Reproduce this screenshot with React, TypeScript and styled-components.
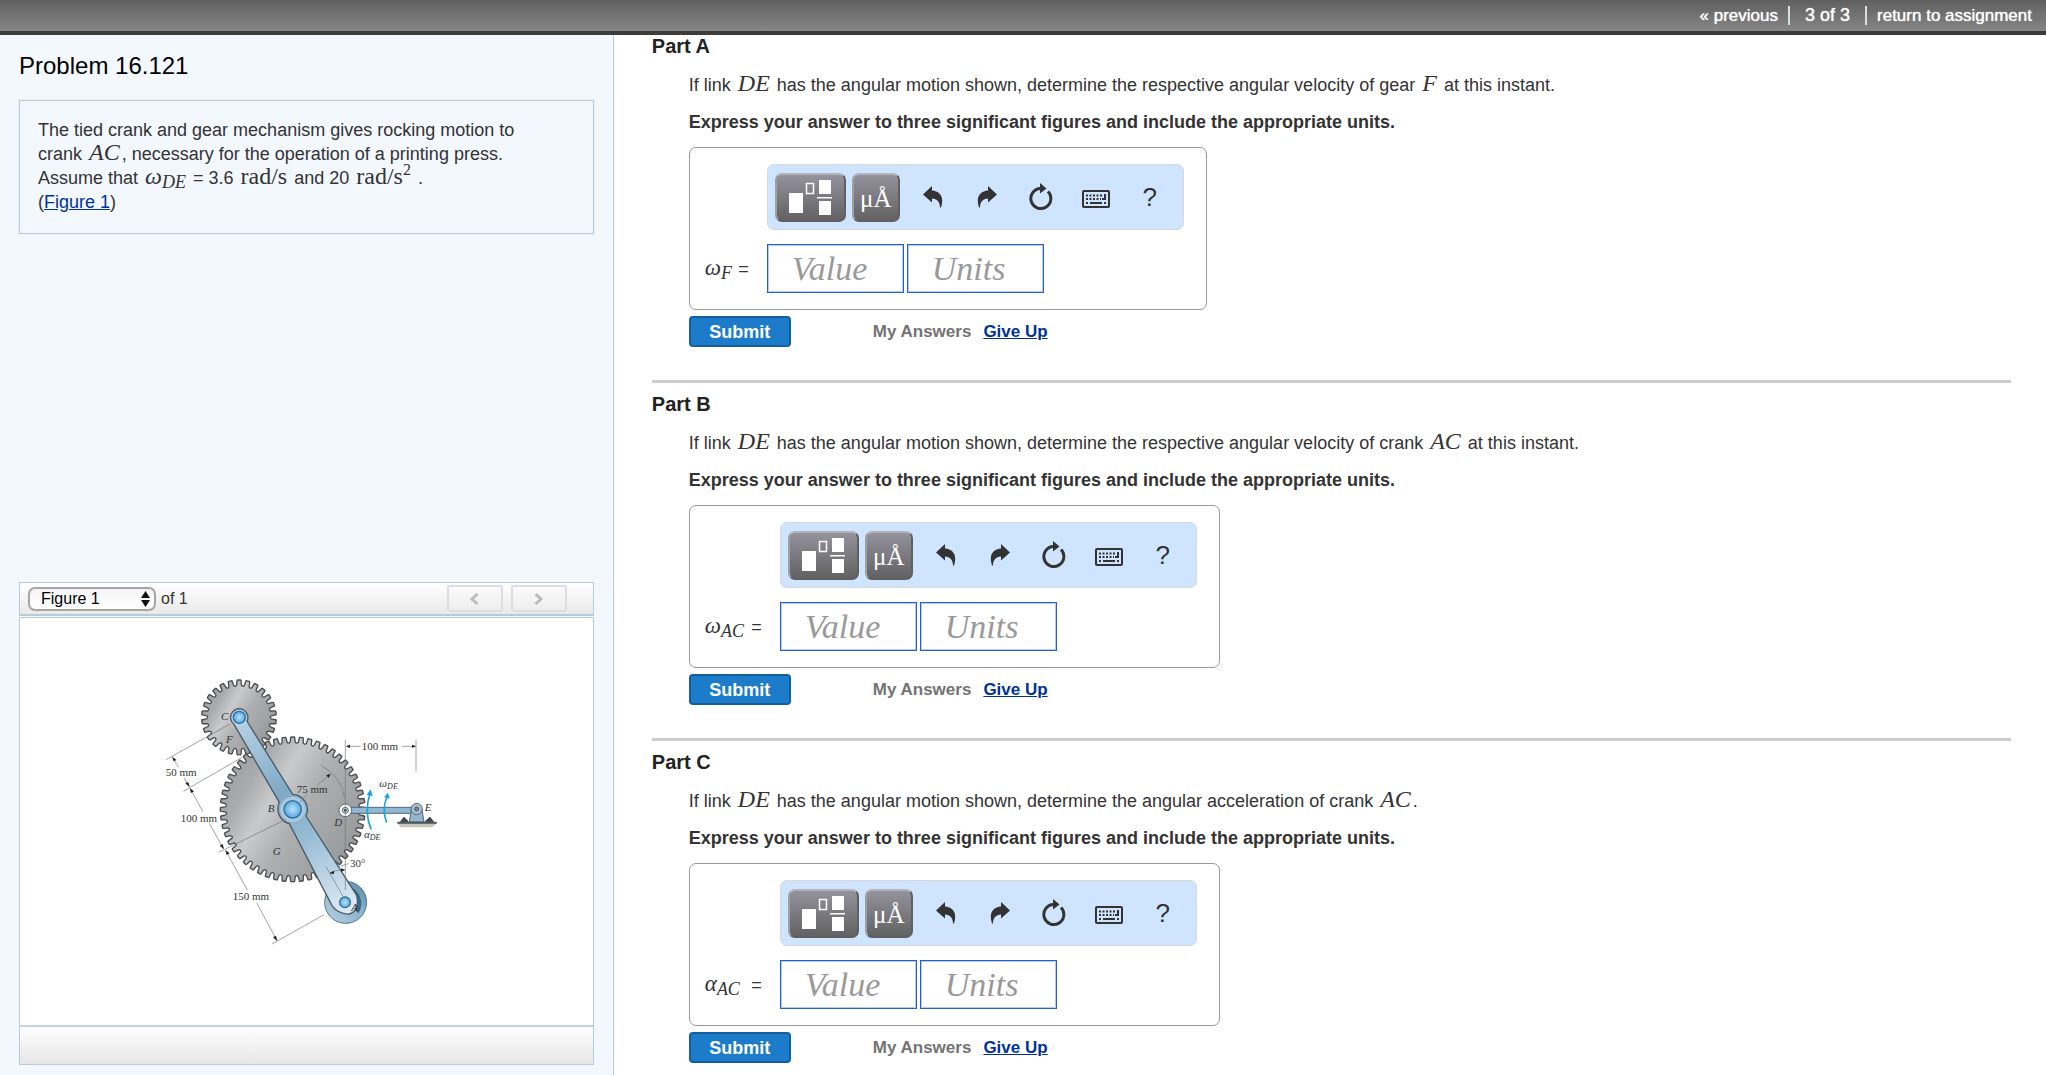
import React from "react";
import styled, { createGlobalStyle } from "styled-components";

const SERIF = `"Liberation Serif", "Times New Roman", serif`;
const SANS = `"Liberation Sans", Arial, sans-serif`;

const GlobalStyle = createGlobalStyle`
  *, *::before, *::after { box-sizing: border-box; }
  body { margin: 0; background: #fff; color: #333; font: 18px/24px ${SANS}; }
  h1, h2, p { margin: 0; }
  button, input, select { font: inherit; }
  a { color: #039; }
`;

const Page = styled.div`
  min-height: 100vh;
  display: flex;
  flex-direction: column;
`;

const TopBar = styled.nav`
  height: 35px;
  flex: none;
  display: flex;
  justify-content: flex-end;
  align-items: flex-start;
  padding: 6px 14px 0 0;
  background: linear-gradient(#5f5f5f, #868686);
  border-bottom: 4px solid #3c3c3c;
  color: #fff;
  font-size: 17px;
  line-height: 19px;
  text-shadow: 0 0 1px #fff;
`;

const BarLink = styled.a`
  color: #fff;
  text-decoration: none;
`;

const BarCount = styled.span`
  margin: 0 10px;
  padding: 0 15px;
  border: solid #ddd;
  border-width: 0 2px;
  font-size: 18px;
`;

const Columns = styled.div`
  flex: 1;
  display: flex;
`;

const Sidebar = styled.aside`
  width: 30%;
  flex: none;
  display: flex;
  flex-direction: column;
  padding: 18px 19px 10px;
  background: #f3f8ff;
  border-right: 1px solid #b5c9dc;
`;

const Title = styled.h1`
  color: #000;
  font-size: 24px;
  font-weight: 400;
  line-height: 26px;
`;

const Intro = styled.section`
  margin-top: 21px;
  padding: 17px 18px 19px;
  border: 1px solid #b5cbe0;
  box-shadow: 0 0 1px #b5cbe0;
`;

const MathText = styled.span<{ $upright?: boolean }>`
  margin: 0 2px;
  font-family: ${SERIF};
  font-size: 24px;
  font-style: ${(p) => (p.$upright ? "normal" : "italic")};
  line-height: 0;
`;

const Sub = styled.sub`
  font-size: 18px;
  line-height: 0;
  vertical-align: -4px;
`;

const Sup = styled.sup`
  font-size: 16px;
  line-height: 0;
  vertical-align: 9px;
`;

const Figure = styled.section`
  margin-top: auto;
  padding-top: 16px;
`;

const FigureBar = styled.header`
  height: 34px;
  display: flex;
  align-items: center;
  padding: 0 26px 0 8px;
  font-size: 16px;
  background: linear-gradient(#fff, #e9e9e9);
  border: 1px solid #b5cbe0;
  border-bottom-width: 2px;
`;

const SelectWrap = styled.div`
  position: relative;
  margin-right: 5px;
`;

const Select = styled.select`
  appearance: none;
  display: block;
  width: 128px;
  height: 24px;
  padding: 0 11px;
  color: #000;
  background: linear-gradient(#f4f4f4, #fff);
  border: 2px solid #a6a6a6;
  border-radius: 7px;
  line-height: 18px;
`;

const SelectArrows = styled.svg`
  position: absolute;
  right: 6px;
  top: 4px;
  pointer-events: none;
`;

const Pager = styled.div`
  margin-left: auto;
  display: flex;
  gap: 8px;
`;

const PagerButton = styled.button`
  width: 56px;
  height: 27px;
  display: grid;
  place-items: center;
  padding: 0;
  background: linear-gradient(#fbfbfb, #eee);
  border: 2px solid #dedede;
  border-radius: 3px;
`;

const FigureBody = styled.div`
  height: 410px;
  margin-top: 1px;
  padding: 42px 20px 0 130px;
  background: #fff;
  border: 1px solid #b5cbe0;
  border-bottom: 2px solid #c3d3e2;
`;

const FigureFoot = styled.footer`
  height: 38px;
  background: linear-gradient(#fff, #e6e6e6);
  border: 1px solid #b5cbe0;
  border-top: 0;
`;

const Main = styled.main`
  flex: 1;
  min-width: 0;
  padding: 0 35px 8px 38px;
`;

const Part = styled.section`
  & + & {
    margin-top: 33px;
    padding-top: 10px;
    border-top: 3px solid #ccc;
  }
`;

const PartTitle = styled.h2`
  color: #222;
  font-size: 20px;
  line-height: 22px;
`;

const PartBody = styled.form`
  padding: 16px 0 0 37px;
`;

const Instruction = styled.p`
  margin: 13px 0;
  font-weight: 700;
`;

const AnswerBox = styled.div`
  width: max-content;
  display: grid;
  grid-template-columns: auto 417px;
  column-gap: 18px;
  row-gap: 14px;
  padding: 16px 22px 16px 15px;
  border: 1px solid #999;
  border-radius: 7px;
`;

const Toolbar = styled.div`
  grid-column: 2;
  height: 66px;
  display: flex;
  align-items: center;
  padding: 0 6px 0 7px;
  background: #cfe5ff;
  border: 1px solid #d8d8d8;
  border-radius: 7px;
`;

const KeyButton = styled.button<{ $wide?: boolean }>`
  width: ${(p) => (p.$wide ? 71 : 48)}px;
  height: 49px;
  display: grid;
  place-items: center;
  margin-right: 6px;
  padding: ${(p) => (p.$wide ? 0 : 4)}px 0 0;
  color: #fff;
  font-family: ${SERIF};
  font-size: 25px;
  line-height: 30px;
  background: linear-gradient(#94929c, #626262);
  border: 2px solid;
  border-color: #b4b4b8 #606060 #606060 #a0a0a4;
  border-radius: 7px;
`;

const ToolButton = styled.button`
  flex: 1;
  height: 49px;
  display: grid;
  place-items: center;
  padding: 0;
  color: #333;
  font-size: 26px;
  background: none;
  border: 0;
`;

const AnswerLabel = styled.label<{ $long: boolean }>`
  width: ${(p) => (p.$long ? 57 : 44)}px;
  display: flex;
  align-items: baseline;
  justify-content: space-between;
  align-self: center;
  white-space: nowrap;
`;

const LabelSymbol = styled(MathText)`
  margin: 0;
  font-size: 23px;
`;

const Fields = styled.div`
  display: flex;
  gap: 3px;
`;

const Field = styled.input`
  width: 137px;
  height: 49px;
  padding: 0 24px;
  font-family: ${SERIF};
  font-size: 34px;
  font-style: italic;
  background: #fff;
  border: 1px solid #2560cc;
  outline: 1px solid #b4caf0;
  outline-offset: -2px;
  &::placeholder { color: #999; opacity: 1; }
`;

const Actions = styled.div`
  display: flex;
  align-items: center;
  margin-top: 6px;
  color: #737373;
  font-size: 17px;
  font-weight: 700;
`;

const Submit = styled.button`
  width: 102px;
  height: 31px;
  margin-right: 82px;
  padding: 0;
  color: #fff;
  font-size: 18px;
  font-weight: 700;
  background: #1c7cca;
  border: 2px solid #14609f;
  border-radius: 4px;
`;

const GiveUp = styled.a`
  margin-left: 12px;
`;

const FigSerif = styled.text`
  font-family: ${SERIF};
  font-size: 33px;
  fill: #333;
`;

const FigItalic = styled(FigSerif)`
  font-style: italic;
`;

/* Outline of a spur gear: flat-topped teeth with rounded joins. */
function gearPath(cx: number, cy: number, outer: number, root: number, teeth: number) {
  const step = (Math.PI * 2) / teeth;
  const pt = (r: number, a: number) =>
    `${(cx + r * Math.cos(a)).toFixed(1)} ${(cy + r * Math.sin(a)).toFixed(1)}`;
  let d = "";
  for (let i = 0; i < teeth; i++) {
    const a = i * step - Math.PI / 2;
    d += `${i ? "L" : "M"}${pt(root + 2, a - step * 0.31)} L${pt(outer - 2, a - step * 0.23)} Q${pt(outer + 1, a - step * 0.2)} ${pt(outer, a - step * 0.12)} L${pt(outer, a + step * 0.12)} Q${pt(outer + 1, a + step * 0.2)} ${pt(outer - 2, a + step * 0.23)} L${pt(root + 2, a + step * 0.31)} Q${pt(root - 4, a + step * 0.5)} ${pt(root + 2, a + step * 0.69)}`;
  }
  return d + "Z";
}

const GearFigure = () => (
  <svg width="300" height="300" viewBox="0 0 900 900" role="img" aria-label="Tied crank and gear mechanism">
    <defs>
      <linearGradient id="steel" x1="0" y1="0.2" x2="1" y2="0.8">
        <stop offset="0" stopColor="#9a9c9e" />
        <stop offset="0.2" stopColor="#a9abad" />
        <stop offset="0.36" stopColor="#c9cacb" />
        <stop offset="0.55" stopColor="#adafb1" />
        <stop offset="1" stopColor="#939597" />
      </linearGradient>
      <linearGradient id="crank" gradientUnits="userSpaceOnUse" x1="268" y1="172" x2="600" y2="740">
        <stop offset="0" stopColor="#b9d3e5" />
        <stop offset="0.4" stopColor="#80a9c6" />
        <stop offset="0.6" stopColor="#93b9d3" />
        <stop offset="1" stopColor="#dde9f3" />
      </linearGradient>
      <radialGradient id="pin">
        <stop offset="0" stopColor="#b9e2fb" />
        <stop offset="1" stopColor="#5aa9dd" />
      </radialGradient>
      <linearGradient id="roller" x1="0" y1="1" x2="1" y2="0">
        <stop offset="0" stopColor="#b4d0e2" />
        <stop offset="0.6" stopColor="#8db4cc" />
        <stop offset="1" stopColor="#4f7f9c" />
      </linearGradient>
    </defs>
    <path d={gearPath(428, 448, 217, 200, 52)} fill="url(#steel)" stroke="#4a4c4e" strokeWidth="4" strokeLinejoin="round" />
    <path d={gearPath(267, 172, 112, 95, 26)} fill="url(#steel)" stroke="#4a4c4e" strokeWidth="4" strokeLinejoin="round" />
    <circle cx="587" cy="727" r="63" fill="url(#roller)" stroke="#5b7688" strokeWidth="3" />
    <path d="M592 676A57 57 0 0 1 626 760L600 740Z" fill="#356c8c" />
    <path
      d="M252 193L388 427A46 46 0 0 0 418 491L546 737Q566 764 598 762Q630 752 620 706L468 468A46 46 0 0 0 428 403L291 184A26 26 0 1 0 252 193Z"
      fill="url(#crank)"
      stroke="#4b5b68"
      strokeWidth="4"
    />
    <circle cx="428" cy="448" r="38" fill="#a9c9df" />
    <g stroke="#2f6f9f" strokeWidth="4" fill="url(#pin)">
      <circle cx="268" cy="172" r="18" />
      <circle cx="428" cy="448" r="26" />
      <circle cx="585" cy="727" r="16" />
    </g>
    <g stroke="#55687a" strokeWidth="3">
      <path d="M600 442H800V460H600Z" fill="#8fb8d3" />
      <path d="M778 486L785 444Q800 420 815 444L822 486Z" fill="#93b7cf" />
      <circle cx="800" cy="447" r="17" fill="#a9bfce" />
      <circle cx="586" cy="451" r="19" fill="#fff" />
      <circle cx="586" cy="451" r="9" fill="#c9d4dc" />
    </g>
    <circle cx="586" cy="451" r="4" fill="#333" />
    <circle cx="800" cy="447" r="6" fill="#6e8fa6" stroke="#333" strokeWidth="2" />
    <path d="M742 489H862L846 502H752Z" fill="#c9c5b8" />
    <path d="M742 488H860" stroke="#49545d" strokeWidth="6" />
    <path d="M752 484L762 472L774 484ZM826 484L840 472L850 484Z" fill="#39444e" stroke="#39444e" strokeWidth="3" />
    <g stroke="#777" strokeWidth="2" fill="none">
      <path d="M48 299L240 192M100 394L276 292M206 577L408 478M366 852L522 764" />
      <path d="M68 293L85 321M102 353L117 380M121 386L158 454M178 490L220 566M227 572L292 690M320 728L380 840" />
      <path d="M586 240V690M798 240V334M590 259H632M756 259H796" />
      <path d="M512 315Q578 352 584 416M538 345L502 376M450 426L470 404M528 620L583 716M540 638Q560 628 584 630M566 620L596 611" />
    </g>
    <g fill="#222">
      <path d="M66 290L80 300L71 304ZM119 382L106 370L115 366ZM119 384L132 394L123 399ZM222 568L209 557L218 552ZM226 570L239 580L230 585ZM382 844L369 832L378 827Z" />
      <path d="M588 259L600 254V264ZM798 259L786 254V264ZM542 341L536 354L529 346ZM538 640L552 632L552 642ZM586 630L573 625L573 636Z" />
    </g>
    <g stroke="#1aa3e0" strokeWidth="5" fill="none">
      <path d="M663 508Q642 456 660 400M710 488Q694 446 712 408" />
    </g>
    <path d="M662 388L668 408L650 404ZM714 398L719 416L702 412Z" fill="#1aa3e0" />
    <FigSerif x="47" y="347">50 mm</FigSerif>
    <FigSerif x="92" y="486">100 mm</FigSerif>
    <FigSerif x="248" y="719">150 mm</FigSerif>
    <FigSerif x="440" y="398">75 mm</FigSerif>
    <FigSerif x="635" y="269">100 mm</FigSerif>
    <FigSerif x="600" y="621">30°</FigSerif>
    <FigItalic x="213" y="181">C</FigItalic>
    <FigItalic x="228" y="248">F</FigItalic>
    <FigItalic x="353" y="455">B</FigItalic>
    <FigItalic x="368" y="586">G</FigItalic>
    <FigItalic x="553" y="499">D</FigItalic>
    <FigItalic x="824" y="454">E</FigItalic>
    <FigItalic x="604" y="752">A</FigItalic>
    <FigItalic x="688" y="382">ω<tspan fontSize="24" dy="6">DE</tspan></FigItalic>
    <FigItalic x="642" y="533">α<tspan fontSize="24" dy="8">DE</tspan></FigItalic>
  </svg>
);

const TemplateIcon = () => (
  <svg width="46" height="38" viewBox="0 0 46 38">
    <path d="M2 15h14v20H2zM32 2h12v14H32zM32 23h12v14H32zM30 19h15v1.5H30z" fill="#fff" />
    <path d="M19.500 5.500h7v10h-7z" fill="none" stroke="#fff" strokeWidth="1.500" />
  </svg>
);

const ArrowIcon = ({ flip }: { flip?: boolean }) => (
  <svg width="20" height="22" viewBox="0 0 20 22">
    <path
      d="M0 8.500L9 0V4.500C17 5 21.500 11 18 21.500H17C17 16 14 12.500 9 12.500V16.500Z"
      fill="#333"
      transform={flip ? "translate(20 0) scale(-1 1)" : undefined}
    />
  </svg>
);

const ResetIcon = () => (
  <svg width="24" height="28" viewBox="0 0 24 28">
    <path d="M19 8.500A10 10 0 1 1 11.500 5.500" fill="none" stroke="#333" strokeWidth="3" />
    <path d="M11 0L17.500 5.500L11 10.500Z" fill="#333" />
  </svg>
);

const KeyboardSvg = styled.svg`
  margin-top: 4px;
`;

const KeyboardIcon = () => (
  <KeyboardSvg width="28" height="18" viewBox="0 0 28 18">
    <rect x="1" y="1" width="26" height="16" rx="1" fill="none" stroke="#333" strokeWidth="2" />
    <path d="M4 5.500H21M4 9H19" stroke="#333" strokeWidth="2" strokeDasharray="2 1.500" />
    <path d="M23 4V9H20M4 13H6M8 13H20M22 13H24" fill="none" stroke="#333" strokeWidth="2" />
  </KeyboardSvg>
);

type PartData = {
  id: string;
  symbol: string;
  sub: string;
  question: React.ReactNode;
};

const parts: PartData[] = [
  {
    id: "A",
    symbol: "ω",
    sub: "F",
    question: (
      <>
        If link <MathText>DE</MathText> has the angular motion shown, determine the respective angular velocity of gear{" "}
        <MathText>F</MathText> at this instant.
      </>
    ),
  },
  {
    id: "B",
    symbol: "ω",
    sub: "AC",
    question: (
      <>
        If link <MathText>DE</MathText> has the angular motion shown, determine the respective angular velocity of crank{" "}
        <MathText>AC</MathText> at this instant.
      </>
    ),
  },
  {
    id: "C",
    symbol: "α",
    sub: "AC",
    question: (
      <>
        If link <MathText>DE</MathText> has the angular motion shown, determine the angular acceleration of crank{" "}
        <MathText>AC</MathText>.
      </>
    ),
  },
];

const AnswerPart = ({ id, symbol, sub, question }: PartData) => (
  <Part>
    <PartTitle>Part {id}</PartTitle>
    <PartBody onSubmit={(e) => e.preventDefault()}>
      <p>{question}</p>
      <Instruction>Express your answer to three significant figures and include the appropriate units.</Instruction>
      <AnswerBox>
        <Toolbar role="toolbar">
          <KeyButton type="button" $wide aria-label="Templates"><TemplateIcon /></KeyButton>
          <KeyButton type="button">μÅ</KeyButton>
          <ToolButton type="button" aria-label="Undo"><ArrowIcon /></ToolButton>
          <ToolButton type="button" aria-label="Redo"><ArrowIcon flip /></ToolButton>
          <ToolButton type="button" aria-label="Reset"><ResetIcon /></ToolButton>
          <ToolButton type="button" aria-label="Keyboard shortcuts"><KeyboardIcon /></ToolButton>
          <ToolButton type="button">?</ToolButton>
        </Toolbar>
        <AnswerLabel htmlFor={`value-${id}`} $long={sub.length > 1}>
          <LabelSymbol>{symbol}<Sub>{sub}</Sub></LabelSymbol>
          <span>=</span>
        </AnswerLabel>
        <Fields>
          <Field id={`value-${id}`} placeholder="Value" />
          <Field aria-label="Units" placeholder="Units" />
        </Fields>
      </AnswerBox>
      <Actions>
        <Submit type="submit">Submit</Submit>
        <span>My Answers</span>
        <GiveUp href="#give-up">Give Up</GiveUp>
      </Actions>
    </PartBody>
  </Part>
);

export default function App() {
  return (
    <Page>
      <GlobalStyle />
      <TopBar>
        <BarLink href="#previous">« previous</BarLink>
        <BarCount>3 of 3</BarCount>
        <BarLink href="#assignment">return to assignment</BarLink>
      </TopBar>
      <Columns>
        <Sidebar>
          <Title>Problem 16.121</Title>
          <Intro>
            <p>
              The tied crank and gear mechanism gives rocking motion to
              <br />
              crank <MathText>AC</MathText>, necessary for the operation of a printing press.
              <br />
              Assume that <MathText>ω<Sub>DE</Sub></MathText> = 3.6 <MathText $upright>rad/s</MathText> and 20{" "}
              <MathText $upright>rad/s<Sup>2</Sup></MathText> .
              <br />
              (<a href="#figure">Figure 1</a>)
            </p>
          </Intro>
          <Figure id="figure">
            <FigureBar>
              <SelectWrap>
                <Select aria-label="Figure"><option>Figure 1</option></Select>
                <SelectArrows width="9" height="16" viewBox="0 0 9 16">
                  <path d="M0 7L4.500 0L9 7ZM0 9H9L4.500 16Z" fill="#111" />
                </SelectArrows>
              </SelectWrap>
              <span>of 1</span>
              <Pager>
                <PagerButton type="button" aria-label="Previous figure">
                  <svg width="9" height="12" viewBox="0 0 9 12"><path d="M7.500 1L2 6L7.500 11" fill="none" stroke="#bdbdbd" strokeWidth="3" /></svg>
                </PagerButton>
                <PagerButton type="button" aria-label="Next figure">
                  <svg width="9" height="12" viewBox="0 0 9 12"><path d="M1.500 1L7 6L1.500 11" fill="none" stroke="#bdbdbd" strokeWidth="3" /></svg>
                </PagerButton>
              </Pager>
            </FigureBar>
            <FigureBody><GearFigure /></FigureBody>
            <FigureFoot />
          </Figure>
        </Sidebar>
        <Main>
          {parts.map((p) => <AnswerPart key={p.id} {...p} />)}
        </Main>
      </Columns>
    </Page>
  );
}
